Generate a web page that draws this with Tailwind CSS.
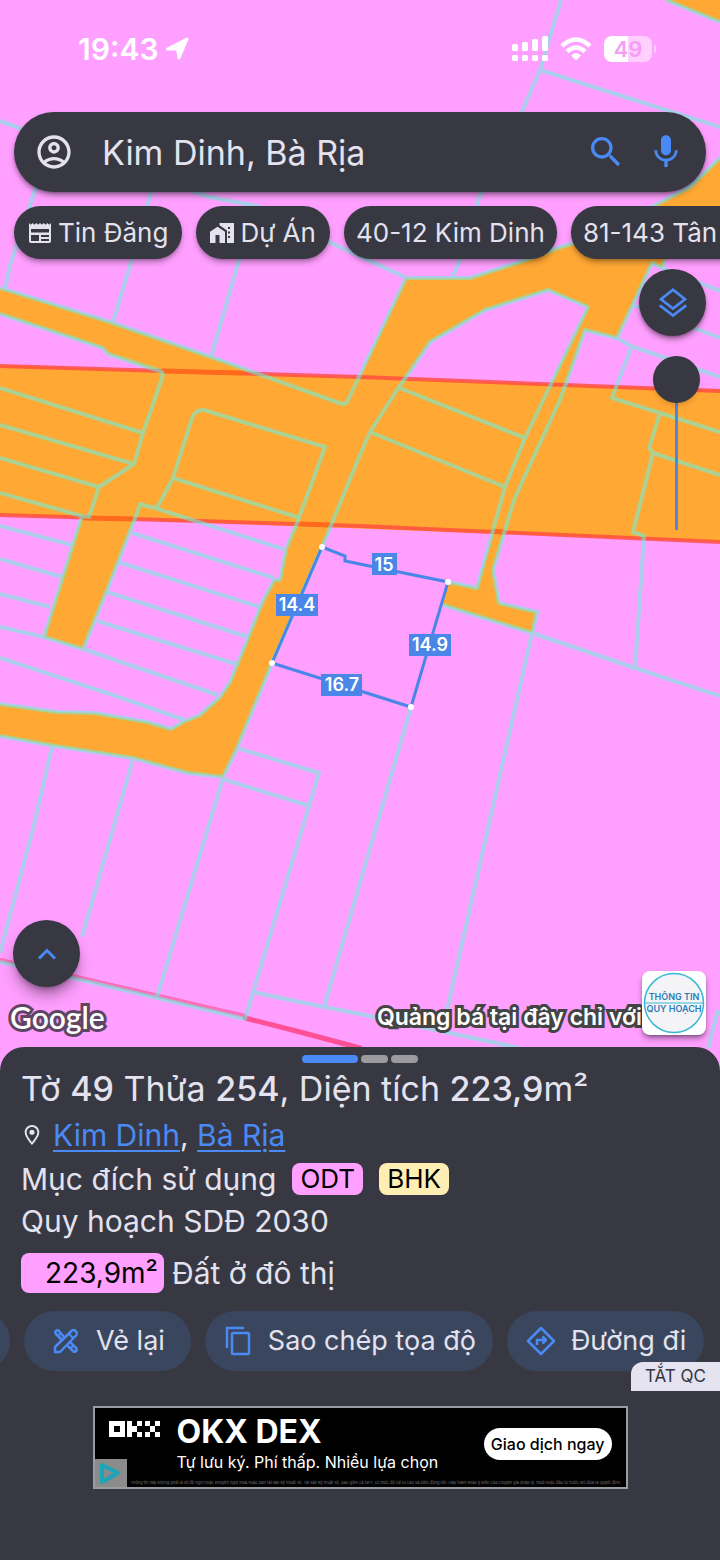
<!DOCTYPE html>
<html lang="vi">

<head>
  <meta charset="UTF-8">
  <meta name="viewport" content="width=device-width, initial-scale=1.0">
  <script src="https://cdn.jsdelivr.net/npm/@tailwindcss/browser@4"></script>
  <title>Thông Tin Quy Hoạch</title>
</head>

<body class="bg-[#373842] font-[Inter,Roboto,sans-serif] text-[#e3e2ee]">
  <main class="relative flex min-h-screen flex-col overflow-hidden">

    <!-- map -->
    <svg class="absolute inset-x-0 top-0 h-auto w-full" viewBox="0 0 720 1080" preserveAspectRatio="xMidYMin slice" role="img" aria-label="Bản đồ quy hoạch">
      <rect width="720" height="1080" fill="#ff9fff" />

      <!-- roads and the planned strip -->
      <g fill="#ffa834">
        <path d="M0 365L720 390V542L0 515Z" />
        <path d="M666 0L720 22V0Z" />
        <path d="M0 288L110 322L211 357L342 404L348 402L406 278H470L520 262L558 248L600 235L640 213L690 187L720 158V205L665 260L662 268L652 263L617 338L585 330L560 400H543L588 307L548 290L485 310L430 342L397 390L360 465L160 400V372L108 354L103 348L0 314Z" />
        <path d="M588 307L525 438L505 487L490 543L477 588L448 582L443 605L532 633L537 612L499 603L493 570L514 500L523 480L560 400L585 330Z" />
        <path d="M89 510L82 516L73 543L44 637L83 649L107 590L137 513L140 504Z" />
        <path d="M0 704L57 712L95 713L147 722L171 729L183 722L200 715L220 697L230 682L237 665L248 638L262 603L274 580H280L286 549L300 510H337L322 547L272 663L237 748L223 777L188 773L133 758L55 746L0 736Z" />
      </g>

      <g fill="none" stroke-linecap="round">
        <path d="M0 366L360 377L720 391M0 515L360 526L720 542" stroke="#ff4a3d" stroke-width="4" opacity=".8" />
        <path d="M163 371L242 373M84 518L133 519M301 524L331 525M493 531L504 532" stroke="#ff6a1c" stroke-width="5" />
        <path d="M60 973L245 1016" stroke="#ff5fa8" stroke-width="4" opacity=".8" />
        <path d="M0 960L14 963" stroke="#ff5fa8" stroke-width="4" opacity=".8" />
        <path d="M245 1018L300 1032L360 1048" stroke="#ff4f95" stroke-width="5" />
      </g>

      <!-- parcel boundaries -->
      <g fill="none" stroke="#6cf0dc" stroke-width="4" stroke-linejoin="round" opacity=".57">
        <path d="M561 0L540 70L519 118L480 195L459 262L452 278M540 70L720 127M666 0L720 22M0 121L209 197L257 206L331 243L407 278" />
        <path d="M45 150L34 193L10 265L5 290M162 150L151 193L131 262L113 322M257 206L239 260L211 357" />
        <path d="M0 288L110 322L211 357L342 404Q347 404 348 400L406 278H470L520 262L558 248L600 235L640 213L690 187L720 158" />
        <path d="M0 314L103 348L108 354L160 371Q164 373 162 378L143 433L134 464L99 487L89 517L82 516L44 637" />
        <path d="M0 388L143 433M0 425L134 464M0 458L99 487M0 493L82 516" />
        <path d="M157 508L173 478L192 418Q196 409 204 410L325 447L297 523L286 549M173 478L297 517" />
        <path d="M83 649L107 590L137 513L140 504L155 508L283 549M286 549L280 580H274L262 603L248 638L237 665L230 682L220 697L200 715L183 722L171 729L147 722L95 713L57 712L0 704" />
        <path d="M132 533L274 578M118 562L260 607M107 592L248 637M97 621L236 664" />
        <path d="M0 526L72 545M0 559L62 577M0 594L50 607M0 627L44 637L83 649L218 695M0 658L110 694L185 720" />
        <path d="M0 736L55 746L133 758L188 773L223 777L237 748L272 663L322 547L360 455L370 432L397 390L430 342L485 310L548 290L588 307L525 438L505 487L477 588L448 582" />
        <path d="M397 387L525 438M370 432L505 487M443 605L532 633L537 612L499 603L493 570L514 500L523 480L560 400L585 330L617 338L652 263L662 268L665 260" />
        <path d="M617 338L631 346L720 377M631 348L612 398L660 413L720 432M660 413L649 448L653 453L720 475M653 453L633 532L644 536L635 668M633 305L720 338M662 268L720 291" />
        <path d="M532 633L635 668L720 696M532 633L447 1010M411 707L324 1007" />
        <path d="M52 747L32 833L0 953M133 759L82 937M223 778L157 997M237 748L319 773L309 806L223 779M309 806L245 1019L157 998L60 975L0 962M252 992L324 1007L360 1014L520 1048M718 1010L708 1048" />
      </g>

      <!-- selected parcel with side lengths -->
      <path d="M322 547L345 556V561L448 582L411 707L272 663Z" fill="none" stroke="#4a86e8" stroke-width="3" />
      <g fill="#fff">
        <circle cx="322" cy="547" r="3" />
        <circle cx="448" cy="582" r="3" />
        <circle cx="411" cy="707" r="3" />
        <circle cx="272" cy="663" r="3" />
      </g>
      <g fill="#4a86e8">
        <path d="M372 553H397V575H372Z" />
        <path d="M276 594H318V616H276Z" />
        <path d="M409 634H451V656H409Z" />
        <path d="M321 674H362V696H321Z" />
      </g>
      <g class="text-[18px] font-semibold" fill="#fff" text-anchor="middle">
        <text x="384" y="571">15</text>
        <text x="297" y="611">14.4</text>
        <text x="430" y="651">14.9</text>
        <text x="342" y="691">16.7</text>
      </g>
    </svg>

    <section class="relative flex flex-1 flex-col">
      <!-- status bar -->
      <div class="flex h-[98px] items-center justify-between pr-16 pl-[78px] text-white">
        <div class="flex items-center gap-1">
          <span class="text-[30px] font-semibold">19:43</span>
          <svg class="size-7" viewBox="0 0 28 28" fill="currentColor" stroke="currentColor" stroke-width="3" stroke-linejoin="round">
            <path d="M24 4L16 23L14.500 14H4.500Z" />
          </svg>
        </div>
        <div class="flex items-center gap-3">
          <svg class="h-[26px] w-9" viewBox="0 0 36 26" fill="currentColor">
            <rect x="0" y="8" width="6" height="7" rx="1.500" />
            <rect x="10" y="6" width="6" height="9" rx="1.500" />
            <rect x="20" y="3" width="6" height="12" rx="1.500" />
            <rect x="30" y="0" width="6" height="15" rx="1.500" />
            <rect x="0" y="19" width="6" height="6" rx="1.500" />
            <rect x="10" y="19" width="6" height="6" rx="1.500" />
            <rect x="20" y="19" width="6" height="6" rx="1.500" />
            <rect x="30" y="19" width="6" height="6" rx="1.500" />
          </svg>
          <svg class="h-6 w-8" viewBox="0 0 32 24" fill="none" stroke="currentColor" stroke-width="4.500">
            <path d="M2 9Q16 -4 30 9" />
            <path d="M7 14.500Q16 6.500 25 14.500" />
            <path d="M16 23.500L11 18.500Q16 13.500 21 18.500Z" fill="currentColor" stroke="none" />
          </svg>
          <div class="flex items-center gap-0.5">
            <span class="flex h-[26px] w-12 items-center justify-center rounded-lg bg-linear-to-r from-white from-49% to-white/50 to-49% text-[22px] font-semibold text-[#f59cf5]">49</span>
            <span class="h-2 w-0.5 rounded-r bg-white/50"></span>
          </div>
        </div>
      </div>

      <!-- search -->
      <form class="mx-[14px] mt-[14px] flex h-20 items-center gap-5 rounded-full bg-[#373842] px-5 text-[#4a8af4] shadow-md shadow-black/40">
        <button type="button" aria-label="Tài khoản" class="text-[#e3e2ee]">
          <svg class="size-10" viewBox="0 0 24 24" fill="currentColor">
            <path d="M12 2C6.480 2 2 6.480 2 12s4.480 10 10 10 10-4.480 10-10S17.520 2 12 2zM7.350 18.500C8.660 17.560 10.260 17 12 17s3.340.56 4.650 1.500C15.340 19.440 13.740 20 12 20s-3.340-.56-4.650-1.500zm10.790-1.380C16.450 15.800 14.320 15 12 15s-4.450.8-6.140 2.120C4.700 15.730 4 13.950 4 12c0-4.420 3.580-8 8-8s8 3.580 8 8c0 1.950-.7 3.730-1.860 5.120zM12 6c-1.930 0-3.500 1.570-3.500 3.500S10.070 13 12 13s3.500-1.570 3.500-3.500S13.930 6 12 6zm0 5c-.83 0-1.500-.67-1.500-1.500S11.170 8 12 8s1.500.67 1.500 1.500S12.830 11 12 11z" />
          </svg>
        </button>
        <input type="text" aria-label="Tìm kiếm" value="Kim Dinh, Bà Rịa" class="ml-2 h-12 min-w-0 flex-1 bg-transparent text-[34px] text-[#e3e2ee] outline-none">
        <button type="submit" aria-label="Tìm">
          <svg class="size-10" viewBox="0 0 24 24" fill="currentColor">
            <path d="M15.500 14h-.79l-.28-.27C15.410 12.590 16 11.110 16 9.500 16 5.910 13.090 3 9.500 3S3 5.910 3 9.500 5.910 16 9.500 16c1.610 0 3.090-.59 4.230-1.570l.27.28v.79l5 4.990L20.490 19l-4.990-5zm-6 0C7.010 14 5 11.990 5 9.500S7.010 5 9.500 5 14 7.010 14 9.500 11.990 14 9.500 14z" />
          </svg>
        </button>
        <button type="button" aria-label="Giọng nói">
          <svg class="size-10" viewBox="0 0 24 24" fill="currentColor">
            <path d="M12 14c1.660 0 2.990-1.340 2.990-3L15 5c0-1.660-1.340-3-3-3S9 3.340 9 5v6c0 1.660 1.340 3 3 3zm5.300-3c0 3-2.540 5.100-5.300 5.100S6.700 14 6.700 11H5c0 3.410 2.720 6.230 6 6.720V21h2v-3.280c3.280-.48 6-3.300 6-6.720h-1.700z" />
          </svg>
        </button>
      </form>

      <!-- quick filters -->
      <div class="mt-[14px] flex gap-[14px] overflow-hidden pb-2 pl-[14px] text-[26px] whitespace-nowrap">
        <button class="flex h-[53px] shrink-0 items-center gap-[6px] rounded-full bg-[#373842] px-[14px] shadow-md shadow-black/30">
          <svg class="size-6" viewBox="0 0 24 24" fill="currentColor">
            <path d="M23 2l-1.830 1.670L19.330 2 17.500 3.670 15.670 2l-1.840 1.670L12 2l-1.830 1.670L8.330 2 6.500 3.670 4.670 2 2.830 3.670 1 2v18c0 1.100.9 2 2 2h18c1.100 0 2-.9 2-2V2zM11 20H3v-6h8v6zm10 0h-8v-2h8v2zm0-4h-8v-2h8v2zm0-4.500H3V8h18v3.500z" />
          </svg>
          Tin Đăng
        </button>
        <button class="flex h-[53px] shrink-0 items-center gap-[6px] rounded-full bg-[#373842] px-[14px] shadow-md shadow-black/30">
          <svg class="size-6" viewBox="0 2 24 20" fill="currentColor">
            <path d="M7.500 5.700L0 10.800V22h5.500v-8h4v8H15V10.800z" />
            <path d="M9.500 2v2.200L17 9.500V22h7V2H9.500zM20 8h-2V6h2v2zm0 4.500h-2v-2h2v2zm0 4.500h-2v-2h2v2z" />
          </svg>
          Dự Án
        </button>
        <button class="h-[53px] shrink-0 rounded-full bg-[#373842] px-3 shadow-md shadow-black/30">40-12 Kim Dinh</button>
        <button class="h-[53px] shrink-0 rounded-full bg-[#373842] pr-12 pl-3 shadow-md shadow-black/30">81-143 Tân</button>
      </div>

      <!-- layers and opacity -->
      <div class="mt-0.5 mr-[14px] flex flex-col items-center gap-5 self-end">
        <button aria-label="Lớp bản đồ" class="flex size-[67px] items-center justify-center rounded-full bg-[#373842] text-[#4a8af4] shadow-md shadow-black/40">
          <svg class="size-9" viewBox="0 0 24 24" fill="none" stroke="currentColor" stroke-width="1.800">
            <path d="M12 3.200L20 9.500L12 15.700L4 9.500Z" />
            <path d="M3.200 13.600L12 20.400L20.800 13.600" />
          </svg>
        </button>
        <input type="range" value="0" aria-label="Độ mờ" class="ml-[7px] h-[174px] w-[47px] appearance-none bg-[linear-gradient(#4a86e8,#4a86e8)] bg-[length:3px_100%] bg-center bg-no-repeat [writing-mode:vertical-lr] [&::-webkit-slider-thumb]:size-[47px] [&::-webkit-slider-thumb]:appearance-none [&::-webkit-slider-thumb]:rounded-full [&::-webkit-slider-thumb]:bg-[#373842] [&::-webkit-slider-thumb]:shadow-md">
      </div>

      <!-- bottom of the map -->
      <div class="mt-auto flex items-end justify-between pr-[14px] pb-3 pl-[10px]">
        <div class="flex flex-col items-start gap-3">
          <button aria-label="Mở rộng" class="ml-[3px] flex size-[67px] items-center justify-center rounded-full bg-[#373842] text-[#4a8af4] shadow-lg shadow-black/40">
            <svg class="size-6" viewBox="0 0 24 24" fill="none" stroke="currentColor" stroke-width="3">
              <path d="M4 16.500L12 8.500L20 16.500" />
            </svg>
          </button>
          <span class="font-[Lato,sans-serif] text-[30px] leading-9 font-semibold text-white [-webkit-text-stroke:6px_#5f4564] [paint-order:stroke_fill]">Google</span>
        </div>
        <div class="flex items-end">
          <p class="pb-0.5 text-[23px] leading-8 font-semibold text-white [-webkit-text-stroke:6px_#444444] [paint-order:stroke_fill]">Quảng bá tại đây chỉ với</p>
          <a href="#" class="relative size-16 rounded-lg bg-white shadow-md shadow-black/40">
            <svg class="size-16" viewBox="0 0 64 64">
              <circle cx="32" cy="32" r="29.500" fill="#f4f4f6" stroke="#3bb8d6" stroke-width="1.500" />
              <path d="M2 32H62" stroke="#3bb8d6" />
              <g class="text-[9px] font-semibold" fill="#2b7bb9" text-anchor="middle">
                <text x="32" y="29">THÔNG TIN</text>
                <text x="32" y="41">QUY HOẠCH</text>
              </g>
            </svg>
          </a>
        </div>
      </div>
    </section>

    <!-- parcel sheet -->
    <section class="relative flex flex-col rounded-t-3xl bg-[#373842] pt-2 pb-[71px]">
      <div class="flex justify-center gap-[3px]">
        <span class="h-2 w-14 rounded-full bg-[#4a8af4]"></span>
        <span class="h-2 w-[27px] rounded-full bg-[#9b9b9e]"></span>
        <span class="h-2 w-[27px] rounded-full bg-[#9b9b9e]"></span>
      </div>

      <div class="flex flex-col px-[21px] text-[30px] whitespace-nowrap">
        <h1 class="mt-[6px] text-[34px] leading-10">Tờ <span class="font-medium">49</span> Thửa <span class="font-medium">254</span>, Diện tích <span class="font-medium">223,9</span>m²</h1>
        <div class="mt-2 flex h-9 items-center gap-[10px]">
          <svg class="size-[22px]" viewBox="0 0 24 24" fill="currentColor">
            <path d="M12 1C7.580 1 4 4.500 4 9c0 5.700 8 14 8 14s8-8.300 8-14c0-4.500-3.580-8-8-8zM6.200 9c0-3.300 2.600-5.800 5.800-5.800s5.800 2.500 5.800 5.800c0 3.200-3.200 7.800-5.800 10.800C9.400 16.800 6.200 12.200 6.200 9z" />
            <circle cx="12" cy="9" r="2.800" />
          </svg>
          <p><a href="#" class="text-[#4a8af4] underline decoration-2 underline-offset-4">Kim Dinh</a>, <a href="#" class="text-[#4a8af4] underline decoration-2 underline-offset-4">Bà Rịa</a></p>
        </div>
        <div class="mt-[6px] flex h-10 items-center gap-4">
          <span>Mục đích sử dụng</span>
          <span class="rounded-lg bg-[#ff9fff] px-2 text-[26px] leading-8 text-black">ODT</span>
          <span class="rounded-lg bg-[#ffeeb4] px-2 text-[26px] leading-8 text-black">BHK</span>
        </div>
        <p class="mt-1 leading-9">Quy hoạch SDĐ 2030</p>
        <div class="mt-[14px] flex items-center gap-2">
          <span class="w-[143px] rounded-lg bg-[#ff9fff] pr-[6px] text-right text-[28px] leading-10 text-black">223,9m²</span>
          <span class="leading-10">Đất ở đô thị</span>
        </div>
      </div>

      <div class="mt-[18px] flex gap-[14px] overflow-hidden text-[27px] whitespace-nowrap">
        <button aria-label="Trước" class="-ml-[50px] h-[60px] w-[60px] shrink-0 rounded-full bg-[#3a465e]"></button>
        <button class="flex h-[60px] shrink-0 items-center gap-[14px] rounded-full bg-[#3a465e] px-[26px]">
          <svg class="size-8 text-[#4a8af4]" viewBox="0 0 32 32" fill="none" stroke="currentColor" stroke-width="2.500" stroke-linejoin="round">
            <path d="M14 12L9 6Q7.500 4.500 6 6Q4.500 7.500 6 9L12 15M17 20L23 26Q24.500 27.500 26 26Q27.500 24.500 26 23L20 17" />
            <path d="M5 27V22L22 5.500Q23.500 4.500 25 5.500L26.500 7Q27.500 8.500 26.500 10L10 27Z" />
            <path d="M11 8L8.500 10.500M23.500 20.500L21 23M19 9L23 13" stroke-width="2" />
          </svg>
          Vẻ lại
        </button>
        <button class="flex h-[60px] shrink-0 items-center gap-[14px] rounded-full bg-[#3a465e] px-[17px]">
          <svg class="size-8 text-[#4a8af4]" viewBox="0 0 32 32" fill="none" stroke="currentColor" stroke-width="2.500">
            <path d="M5 23V3H22" />
            <rect x="10" y="8" width="17" height="21" rx="1" />
          </svg>
          Sao chép tọa độ
        </button>
        <button class="flex h-[60px] shrink-0 items-center gap-[14px] rounded-full bg-[#3a465e] px-[18px]">
          <svg class="size-8 text-[#4a8af4]" viewBox="0 0 32 32" fill="none" stroke="currentColor" stroke-width="2.500" stroke-linejoin="round">
            <path d="M16 3L29 16L16 29L3 16Z" />
            <path d="M12 20V15H20M17.500 11.500L21 15L17.500 18.500" />
          </svg>
          Đường đi
        </button>
      </div>

      <button class="relative -mt-[9px] h-[29px] self-end rounded-tl-xl bg-[#e4e3ef] px-[14px] text-[17px] text-[#33343e]">TẮT QC</button>

      <!-- advert -->
      <div class="relative mx-auto mt-[15px] flex h-[83px] w-[535px] justify-between border-2 border-[#9b9ba2] bg-black text-white">
        <div class="flex gap-4 pl-[14px]">
          <svg class="mt-[13px] h-4 w-[52px]" viewBox="0 0 52 16" fill="currentColor">
            <path d="M0 0H16V16H0ZM5 5V11H11V5Z" fill-rule="evenodd" />
            <path d="M18 0H23V5H28V0H33V5H28V11H33V16H28V11H23V16H18Z" />
            <path d="M36 0H41V5H46V0H51V5H46V11H51V16H46V11H41V16H36V11H41V5H36Z" />
          </svg>
          <div>
            <p class="mt-2 text-[32px] leading-8 font-bold">OKX DEX</p>
            <p class="text-[16px] leading-7">Tự lưu ký. Phí thấp. Nhiều lựa chọn</p>
          </div>
        </div>
        <a href="#" class="mt-5 mr-[14px] h-8 rounded-full bg-white px-[7px] text-[16px] leading-8 font-medium text-black">Giao dịch ngay</a>
        <p class="absolute bottom-0 left-9 text-[4px] leading-[8px] whitespace-nowrap text-[#77777a]">Thông tin này không phải là lời đề nghị hoặc khuyến nghị mua hoặc bán tài sản kỹ thuật số. Tài sản kỹ thuật số, bao gồm cả NFT, có mức độ rủi ro cao và biến động lớn. Hãy tham khảo ý kiến của chuyên gia pháp lý, thuế hoặc đầu tư trước khi đưa ra quyết định.</p>
        <svg class="absolute bottom-0 left-0 h-7 w-8" viewBox="0 0 32 28">
          <rect width="32" height="28" fill="#8b8b8b" />
          <path d="M7 6L23 14L7 23Z" fill="none" stroke="#1aa5b8" stroke-width="4" stroke-linejoin="round" />
        </svg>
      </div>
    </section>
  </main>
</body>

</html>
